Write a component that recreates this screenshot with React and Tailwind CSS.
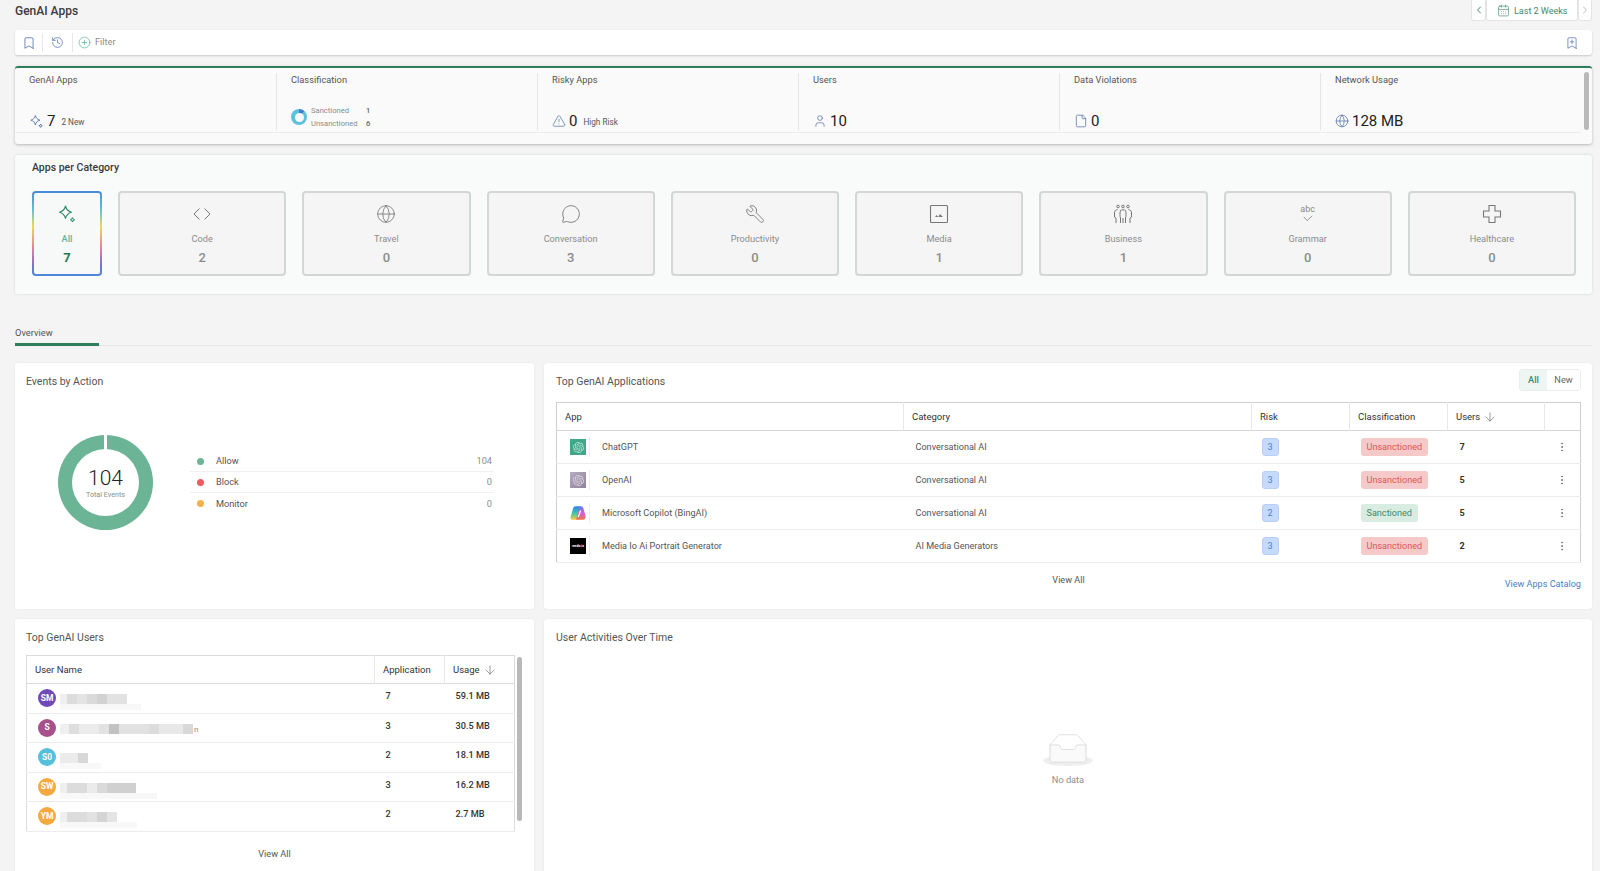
import {
  ArrowDown,
  Bookmark,
  BookmarkPlus,
  CalendarDays,
  ChevronLeft,
  ChevronRight,
  CirclePlus,
  EllipsisVertical,
  File,
  Globe,
  History,
  MessageCircle,
  TriangleAlert,
  User,
  Wrench,
} from 'lucide-react';
import { SiOpenai } from 'react-icons/si';

const SparkleIcon = ({ className }) => (
  <svg viewBox="0 0 20 20" fill="none" stroke="currentColor" strokeWidth="1.1" className={className}>
    <path d="M8.5 2 C9.3 5.4 11 7.2 14.5 8.2 C11 9.2 9.3 11 8.5 14.5 C7.7 11 6 9.2 2.5 8.2 C6 7.2 7.7 5.4 8.5 2 Z" strokeLinejoin="round" />
    <path d="M15.5 13.5 C15.8 14.8 16.4 15.4 17.7 15.7 C16.4 16 15.8 16.6 15.5 17.9 C15.2 16.6 14.6 16 13.3 15.7 C14.6 15.4 15.2 14.8 15.5 13.5 Z" />
  </svg>
);

const CodeIcon = ({ className }) => (
  <svg viewBox="0 0 20 20" fill="none" stroke="currentColor" strokeWidth="1" className={className}>
    <path d="M7.5 4.5 L2 10 L7.5 15.5" />
    <path d="M12.5 4.5 L18 10 L12.5 15.5" />
  </svg>
);

const MediaIcon = ({ className }) => (
  <svg viewBox="0 0 20 20" fill="none" stroke="currentColor" strokeWidth="1.1" className={className}>
    <rect x="1.5" y="1.5" width="17" height="17" rx="1" />
    <path d="M6 13 L7.7 11 L9.2 13 Z M9.3 13 L11 10 L14 13 Z" fill="currentColor" stroke="none" />
  </svg>
);

const BusinessIcon = ({ className }) => (
  <svg viewBox="0 0 20 20" fill="none" stroke="currentColor" strokeWidth="1" className={className}>
    <circle cx="5" cy="2.5" r="1.3" />
    <circle cx="10" cy="2.5" r="1.3" />
    <circle cx="15" cy="2.5" r="1.3" />
    <path d="M7.5 19 V14 C6.8 13 6.8 8 7.5 6.5 C8 5.6 12 5.6 12.5 6.5 C13.2 8 13.2 13 12.5 14 V19" />
    <path d="M10 14 V19" />
    <path d="M4.5 5.5 C2.5 6 1.5 7 1.5 9 V13 L3 14 V19" />
    <path d="M15.5 5.5 C17.5 6 18.5 7 18.5 9 V13 L17 14 V19" />
  </svg>
);

const GrammarIcon = () => (
  <div className="flex h-[20px] w-[20px] flex-col items-center">
    <span className="text-[9px] leading-[10px] text-[#8a8a8a]">abc</span>
    <svg viewBox="0 0 12 8" fill="none" stroke="#7a7a7a" strokeWidth="0.9" className="mt-[1px] h-[7px] w-[10px]">
      <path d="M1 2 L5 6.5 L11 1" />
    </svg>
  </div>
);

const HealthIcon = ({ className }) => (
  <svg viewBox="0 0 20 20" fill="none" stroke="currentColor" strokeWidth="1.1" className={className}>
    <path d="M7 1.5 H13 V7 H18.5 V13 H13 V18.5 H7 V13 H1.5 V7 H7 Z" />
  </svg>
);

const EmptyIcon = () => (
  <svg width="50" height="32" viewBox="0 0 64 41">
    <g transform="translate(0 1)" fill="none" fillRule="evenodd">
      <ellipse fill="#eeeeee" cx="32" cy="33" rx="32" ry="7" />
      <g fillRule="nonzero" stroke="#d9d9d9">
        <path d="M55 12.76L44.854 1.258C44.367.474 43.656 0 42.907 0H21.093c-.749 0-1.46.474-1.947 1.257L9 12.761V22h46v-9.24z" />
        <path d="M41.613 15.931c0-1.605.994-2.93 2.227-2.931H55v18.137C55 33.26 53.68 35 52.05 35h-40.1C10.32 35 9 33.259 9 31.137V13h11.16c1.233 0 2.227 1.323 2.227 2.928v.022c0 1.605 1.005 2.901 2.237 2.901h14.752c1.232 0 2.237-1.308 2.237-2.913v-.007z" fill="#fafafa" />
      </g>
    </g>
  </svg>
);

const CopilotLogo = () => (
  <svg viewBox="0 0 20 20" className="h-[16px] w-[16px]">
    <defs>
      <linearGradient id="cpA" x1="0" y1="0" x2="0" y2="1">
        <stop offset="0" stopColor="#2d7ff0" />
        <stop offset="0.5" stopColor="#37c8a8" />
        <stop offset="1" stopColor="#f8c93c" />
      </linearGradient>
      <linearGradient id="cpB" x1="0" y1="0" x2="0" y2="1">
        <stop offset="0" stopColor="#5f78f0" />
        <stop offset="0.5" stopColor="#d35fe0" />
        <stop offset="1" stopColor="#f2743e" />
      </linearGradient>
    </defs>
    <path d="M13 1.5 C15 1.5 16.2 2.6 16.8 4.4 L19.4 13.5 C20 16.4 18.5 18.5 16.5 18.5 H7 L9.5 8 C10.2 4 11 1.5 13 1.5 Z" fill="url(#cpB)" />
    <path d="M7 1.5 H13.5 C11.6 2 11 4.5 10.4 7.5 L8 16.5 C7.6 17.9 6.6 18.5 5.5 18.5 H3.5 C1.2 18.5 0.2 16.8 0.8 14.8 L3.8 4.5 C4.4 2.4 5.5 1.5 7 1.5 Z" fill="url(#cpA)" />
    <path d="M13 7.5 L10.5 14.5" stroke="#ffffff" strokeWidth="1.6" strokeLinecap="round" />
  </svg>
);

const ChatLogo = () => (
  <div className="flex h-[16px] w-[16px] items-center justify-center bg-[#3fa888] text-[#b9e3d5]">
    <SiOpenai className="h-[11px] w-[11px]" />
  </div>
);

const OpenAiLogo = () => (
  <div className="flex h-[16px] w-[16px] items-center justify-center bg-[linear-gradient(135deg,#b5adc0,#8f8399)] text-[#dcd7e2]">
    <SiOpenai className="h-[11px] w-[11px]" />
  </div>
);

const MediaLogo = () => (
  <div className="flex h-[16px] w-[16px] items-center justify-center overflow-hidden bg-black">
    <span className="text-[3px] leading-none font-bold text-white">media.io</span>
  </div>
);

const stats = [
  { label: 'GenAI Apps', icon: <SparkleIcon className="h-[15px] w-[15px] text-[#4a6aa5]" />, value: '7', note: '2 New' },
  { label: 'Classification' },
  { label: 'Risky Apps', icon: <TriangleAlert size={14} strokeWidth={1.2} className="text-[#4a6aa5]" />, value: '0', note: 'High Risk' },
  { label: 'Users', icon: <User size={14} strokeWidth={1.2} className="text-[#4a6aa5]" />, value: '10' },
  { label: 'Data Violations', icon: <File size={14} strokeWidth={1.2} className="text-[#4a6aa5]" />, value: '0' },
  { label: 'Network Usage', icon: <Globe size={14} strokeWidth={1.2} className="text-[#4a6aa5]" />, value: '128 MB' },
];

const categories = [
  { name: 'Code', count: 2, icon: <CodeIcon className="h-[20px] w-[20px]" /> },
  { name: 'Travel', count: 0, icon: <Globe size={20} strokeWidth={1} /> },
  { name: 'Conversation', count: 3, icon: <MessageCircle size={20} strokeWidth={1.1} /> },
  { name: 'Productivity', count: 0, icon: <Wrench size={20} strokeWidth={1.1} className="-scale-x-100" /> },
  { name: 'Media', count: 1, icon: <MediaIcon className="h-[20px] w-[20px]" /> },
  { name: 'Business', count: 1, icon: <BusinessIcon className="h-[20px] w-[20px]" /> },
  { name: 'Grammar', count: 0, icon: <GrammarIcon /> },
  { name: 'Healthcare', count: 0, icon: <HealthIcon className="h-[20px] w-[20px]" /> },
];

const legend = [
  { name: 'Allow', value: 104, dot: 'bg-[#6bb596]' },
  { name: 'Block', value: 0, dot: 'bg-[#ea5f5f]' },
  { name: 'Monitor', value: 0, dot: 'bg-[#f5b04a]' },
];

const apps = [
  { name: 'ChatGPT', logo: <ChatLogo />, category: 'Conversational AI', risk: 3, sanctioned: false, users: 7 },
  { name: 'OpenAI', logo: <OpenAiLogo />, category: 'Conversational AI', risk: 3, sanctioned: false, users: 5 },
  { name: 'Microsoft Copilot (BingAI)', logo: <CopilotLogo />, category: 'Conversational AI', risk: 2, sanctioned: true, users: 5 },
  { name: 'Media Io Ai Portrait Generator', logo: <MediaLogo />, category: 'AI Media Generators', risk: 3, sanctioned: false, users: 2 },
];

const users = [
  { initials: 'SM', color: 'bg-[#6f4bb8]', app: 7, usage: '59.1 MB', blur: ['w-[7px] bg-[#efefef]', 'w-[10px] bg-[#dcdcdc]', 'w-[10px] bg-[#e4e4e4]', 'w-[10px] bg-[#dadada]', 'w-[10px] bg-[#d2d2d2]', 'w-[20px] bg-[#e2e2e2]'], sub: 'w-[81px]' },
  { initials: 'S', color: 'bg-[#a8508c]', app: 3, usage: '30.5 MB', blur: ['w-[9px] bg-[#efefef]', 'w-[10px] bg-[#dedede]', 'w-[20px] bg-[#ebebeb]', 'w-[10px] bg-[#e2e2e2]', 'w-[10px] bg-[#c2c2c2]', 'w-[30px] bg-[#e2e2e2]', 'w-[10px] bg-[#dcdcdc]', 'w-[24px] bg-[#e8e8e8]', 'w-[10px] bg-[#d8d8d8]'] },
  { initials: 'S0', color: 'bg-[#56c0da]', app: 2, usage: '18.1 MB', blur: ['w-[18px] bg-[#ebebeb]', 'w-[10px] bg-[#d8d8d8]'], sub: 'w-[41px]' },
  { initials: 'SW', color: 'bg-[#f5a93f]', app: 3, usage: '16.2 MB', blur: ['w-[7px] bg-[#efefef]', 'w-[20px] bg-[#dcdcdc]', 'w-[10px] bg-[#ebebeb]', 'w-[10px] bg-[#dadada]', 'w-[29px] bg-[#d0d0d0]'], sub: 'w-[97px]' },
  { initials: 'YM', color: 'bg-[#f5a93f]', app: 2, usage: '2.7 MB', blur: ['w-[7px] bg-[#efefef]', 'w-[20px] bg-[#dcdcdc]', 'w-[10px] bg-[#e2e2e2]', 'w-[10px] bg-[#d4d4d4]', 'w-[10px] bg-[#e4e4e4]'], sub: 'w-[77px]' },
];

const Card = ({ children, className }) => (
  <div className={`rounded-[3px] bg-white shadow-[0_0_2px_rgba(0,0,0,0.08)] ${className}`}>{children}</div>
);

const HeadCell = ({ children, last }) => (
  <th className={`px-[8px] text-left text-[9.5px] leading-[14px] font-normal text-[#333] ${last ? '' : 'border-r border-[#e8e8e8]'}`}>{children}</th>
);

export default function App() {
  return (
    <div className="h-screen overflow-hidden bg-[#f4f4f4] pr-[8px] pl-[15px] font-[Roboto,sans-serif]">
      {/* title row */}
      <div className="flex h-[30px] items-start justify-between">
        <h1 className="mt-[3px] text-[12px] leading-[16px] font-medium text-[#3a3a3a]">GenAI Apps</h1>
        <div className="flex h-[21px] items-stretch">
          <div className="flex w-[15px] items-center justify-center rounded-b-[3px] border border-t-0 border-[#e4e4e4] bg-white text-[#3c8c6a]">
            <ChevronLeft size={12} />
          </div>
          <div className="flex w-[92px] items-center gap-[4px] rounded-b-[3px] border border-t-0 border-[#e4e4e4] bg-white pt-[1px] pl-[10px] text-[9px] leading-[12px] text-[#3c8c6a]">
            <CalendarDays size={13} strokeWidth={1.2} />
            <span>Last 2 Weeks</span>
          </div>
          <div className="flex w-[14px] items-center justify-center rounded-b-[3px] border border-t-0 border-[#e4e4e4] bg-white text-[#bbb]">
            <ChevronRight size={12} />
          </div>
        </div>
      </div>

      {/* filter bar */}
      <div className="flex h-[25px] items-center rounded-[3px] bg-white shadow-[0_1px_2px_rgba(0,0,0,0.18)]">
        <div className="flex h-[19px] w-[28px] items-center justify-center border-r border-[#e8e8e8] text-[#4a6aa5]">
          <Bookmark size={14} strokeWidth={1.3} />
        </div>
        <div className="flex h-[19px] w-[30px] items-center justify-center border-r border-[#e8e8e8] text-[#4a6aa5]">
          <History size={13} strokeWidth={1.3} />
        </div>
        <CirclePlus size={13} strokeWidth={1.2} className="ml-[5px] text-[#4fa887]" />
        <span className="-mt-[1px] ml-[4px] text-[9.2px] leading-[12px] text-[#8c8c8c]">Filter</span>
        <BookmarkPlus size={14} strokeWidth={1.2} className="mr-[13px] ml-auto text-[#4a6aa5]" />
      </div>

      {/* stats */}
      <div className="mt-[11px] h-[78px] rounded-[3px] border-t-2 border-[#2f7d5b] bg-[#fafafa] shadow-[0_1px_3px_rgba(0,0,0,0.25)]">
        <div className="flex h-[65px] items-start">
          <div className="grid h-[65px] w-[1566px] grid-cols-6 border-b border-[#ececec]">
            {stats.map((s, i) => (
              <div key={s.label} className={`mt-[5px] flex h-[57px] flex-col justify-between pl-[14px] ${i > 0 ? 'border-l border-[#e6e6e6]' : ''}`}>
                <span className="text-[9.3px] leading-[14px] text-[#555]">{s.label}</span>
                {s.label === 'Classification' ? (
                  <div className="flex h-[26px] items-center">
                    <div className="flex h-[16px] w-[16px] items-center justify-center rounded-full bg-[conic-gradient(#3f7fd0_0_12%,#5cc2de_12%_100%)]">
                      <div className="h-[9px] w-[9px] rounded-full bg-[#fafafa]" />
                    </div>
                    <div className="ml-[4px] grid grid-cols-[55px_auto] text-[7.6px] leading-[13px] text-[#8c8c8c]">
                      <span>Sanctioned</span>
                      <span className="font-medium text-[#666]">1</span>
                      <span>Unsanctioned</span>
                      <span className="font-medium text-[#666]">6</span>
                    </div>
                  </div>
                ) : (
                  <div className="flex h-[18px] items-center gap-[3px]">
                    {s.icon}
                    <span className="text-[15px] leading-[18px] text-[#222]">{s.value}</span>
                    {s.note && <span className="mt-[3px] ml-[3px] text-[8.2px] text-[#555]">{s.note}</span>}
                  </div>
                )}
              </div>
            ))}
          </div>
          <div className="mt-[4px] ml-[3px] h-[58px] w-[5px] rounded-full bg-[#b9b9b9]" />
        </div>
      </div>

      {/* apps per category */}
      <div className="mt-[11px] h-[139px] rounded-[3px] bg-[#f9fafa] pt-[6px] pr-[16px] pl-[17px] shadow-[0_0_3px_rgba(0,0,0,0.12)]">
        <h2 className="text-[10.5px] leading-[14px] font-medium text-[#3a3a3a]">Apps per Category</h2>
        <div className="mt-[16px] flex gap-[16px]">
          <div className="h-[85px] w-[70px] shrink-0 rounded-[4px] bg-[linear-gradient(180deg,#4a8ad8_0%,#57c4d8_22%,#f0d94e_42%,#ec7aa0_68%,#7a6fd0_88%,#4a8ad8_100%)] p-[2px]">
            <div className="flex h-full flex-col items-center rounded-[2px] bg-[#f7f8f8] pt-[11px]">
              <SparkleIcon className="h-[20px] w-[20px] text-[#2f8a65]" />
              <span className="mt-[8px] text-[9.2px] leading-[14px] font-medium text-[#62b596]">All</span>
              <span className="mt-[5px] text-[13px] leading-[14px] font-bold text-[#1f7a54]">7</span>
            </div>
          </div>
          {categories.map((c) => (
            <div key={c.name} className="flex h-[85px] flex-1 flex-col items-center rounded-[4px] border-2 border-[#d3d6d6] bg-[#f5f5f5] pt-[11px] text-[#777]">
              {c.icon}
              <span className="mt-[8px] text-[9.2px] leading-[14px] text-[#8c8c8c]">{c.name}</span>
              <span className="mt-[5px] text-[13px] leading-[14px] font-medium text-[#8c8c8c]">{c.count}</span>
            </div>
          ))}
        </div>
      </div>

      {/* tabs */}
      <div className="border-b border-[#e6e6e6] pt-[32px]">
        <div className="-mb-px w-[84px] border-b-[3px] border-[#2f7d5b] pb-[3px] text-[9.3px] leading-[14px] text-[#555]">Overview</div>
      </div>

      {/* first row */}
      <div className="mt-[17px] grid h-[246px] grid-cols-[519px_1fr] gap-[10px]">
        <Card className="px-[11px] pt-[12px]">
          <h2 className="text-[10.5px] leading-[14px] text-[#555]">Events by Action</h2>
          <div className="mt-[46px] flex items-center">
            <div className="relative ml-[32px] h-[95px] w-[95px] rounded-full bg-[conic-gradient(#ffffff_0_0.6%,#6bb596_0.6%_99.4%,#ffffff_99.4%_100%)]">
              <div className="absolute inset-[14px] flex flex-col items-center justify-center rounded-full bg-white">
                <span className="text-[21px] leading-[24px] font-light text-[#222]">104</span>
                <span className="text-[7.2px] leading-[10px] text-[#8c8c8c]">Total Events</span>
              </div>
            </div>
            <div className="ml-[37px] w-[304px]">
              {legend.map((l, i) => (
                <div key={l.name} className={`flex h-[21px] items-center pr-[2px] pl-[7px] text-[9.2px] ${i < 2 ? 'border-b border-[#f0f0f0]' : ''}`}>
                  <span className={`h-[7px] w-[7px] rounded-full ${l.dot}`} />
                  <span className="ml-[12px] text-[#555]">{l.name}</span>
                  <span className="ml-auto text-[#8c8c8c]">{l.value}</span>
                </div>
              ))}
            </div>
          </div>
        </Card>

        <Card className="pt-[6px] pr-[11px] pl-[12px]">
          <div className="flex items-start justify-between">
            <h2 className="mt-[6px] text-[10.5px] leading-[14px] text-[#555]">Top GenAI Applications</h2>
            <div className="flex h-[22px] overflow-hidden rounded-[3px] border border-[#ececec] text-[9.2px]">
              <span className="flex w-[27px] items-center justify-center bg-[#eff5f2] font-medium text-[#3c8c6a]">All</span>
              <span className="flex w-[33px] items-center justify-center text-[#666]">New</span>
            </div>
          </div>
          <table className="mt-[11px] w-full table-fixed border-collapse border border-[#cfcfcf]">
            <colgroup>
              <col className="w-[347px]" />
              <col className="w-[348px]" />
              <col className="w-[98px]" />
              <col className="w-[98px]" />
              <col className="w-[97px]" />
              <col />
            </colgroup>
            <thead>
              <tr className="h-[28px] border-b border-[#d6d6d6]">
                <HeadCell>App</HeadCell>
                <HeadCell>Category</HeadCell>
                <HeadCell>Risk</HeadCell>
                <HeadCell>Classification</HeadCell>
                <HeadCell>
                  <span className="flex items-center gap-[3px]">
                    Users <ArrowDown size={14} strokeWidth={1.1} className="text-[#666]" />
                  </span>
                </HeadCell>
                <HeadCell last />
              </tr>
            </thead>
            <tbody>
              {apps.map((a) => (
                <tr key={a.name} className="h-[33px] border-b border-[#ececec] text-[9.1px] leading-[14px] text-[#555]">
                  <td className="pl-[13px]">
                    <div className="flex items-center">
                      <span className="w-[19px]">{a.logo}</span>
                      <span className="h-[20px] border-l border-[#eeeeee]" />
                      <span className="ml-[12px]">{a.name}</span>
                    </div>
                  </td>
                  <td className="pl-[12px]">{a.category}</td>
                  <td className="pl-[10px]">
                    <span className="flex h-[18px] w-[17px] items-center justify-center rounded-[3px] border border-[#b7cff8] bg-[#c6dafb] text-[#4a7fd8]">{a.risk}</span>
                  </td>
                  <td className="pl-[11px]">
                    {a.sanctioned ? (
                      <span className="inline-flex h-[18px] items-center rounded-[3px] bg-[#d8ece2] px-[6px] text-[#3f8a68]">Sanctioned</span>
                    ) : (
                      <span className="inline-flex h-[18px] items-center rounded-[3px] bg-[#f5c9c7] px-[6px] text-[#e0555a]">Unsanctioned</span>
                    )}
                  </td>
                  <td className="pl-[12px] font-bold text-[#333]">{a.users}</td>
                  <td className="text-[#777]">
                    <div className="flex justify-center">
                      <EllipsisVertical size={12} />
                    </div>
                  </td>
                </tr>
              ))}
            </tbody>
          </table>
          <div className="mt-[10px] grid grid-cols-3 items-start text-[9.1px] leading-[14px]">
            <span />
            <span className="text-center text-[#555]">View All</span>
            <span className="mt-[4px] text-right text-[#4a80c8]">View Apps Catalog</span>
          </div>
        </Card>
      </div>

      {/* second row */}
      <div className="mt-[10px] grid h-[300px] grid-cols-[519px_1fr] gap-[10px]">
        <Card className="pt-[12px] pr-[12px] pl-[11px]">
          <h2 className="text-[10.5px] leading-[14px] text-[#555]">Top GenAI Users</h2>
          <div className="mt-[10px] flex items-start">
            <table className="w-[488px] table-fixed border-collapse border border-[#dcdcdc]">
              <colgroup>
                <col className="w-[348px]" />
                <col className="w-[70px]" />
                <col className="w-[70px]" />
              </colgroup>
              <thead>
                <tr className="h-[28px] border-b border-[#dcdcdc]">
                  <HeadCell>User Name</HeadCell>
                  <HeadCell>Application</HeadCell>
                  <HeadCell last>
                    <span className="flex items-center gap-[3px]">
                      Usage <ArrowDown size={14} strokeWidth={1.1} className="text-[#666]" />
                    </span>
                  </HeadCell>
                </tr>
              </thead>
              <tbody>
                {users.map((u) => (
                  <tr key={u.initials} className="h-[29.6px] border-b border-[#ececec] align-top text-[9.2px] font-medium text-[#333]">
                    <td className="pl-[11px]">
                      <div className="mt-[5px] flex">
                        <span className={`flex h-[18px] w-[18px] items-center justify-center rounded-full text-[8.5px] font-bold text-white ${u.color}`}>{u.initials}</span>
                        <div className="mt-[5px] ml-[4px]">
                          <div className="flex h-[10px]">
                            {u.blur.map((b, i) => (
                              <span key={i} className={b} />
                            ))}
                            {!u.sub && <span className="ml-[1px] text-[8px] leading-[12px] font-normal text-[#888]">n</span>}
                          </div>
                          {u.sub && <div className={`h-[6px] bg-[#f8f8f8] ${u.sub}`} />}
                        </div>
                      </div>
                    </td>
                    <td className="pt-[5px] pl-[11px]">{u.app}</td>
                    <td className="pt-[5px] pl-[11px]">{u.usage}</td>
                  </tr>
                ))}
              </tbody>
            </table>
            <div className="mt-[2px] ml-[2px] h-[164px] w-[5px] rounded-full bg-[#b9b9b9]" />
          </div>
          <div className="mt-[15px] w-[497px] text-center text-[9.2px] text-[#555]">View All</div>
        </Card>

        <Card className="px-[12px] pt-[12px]">
          <h2 className="text-[10.5px] leading-[14px] text-[#555]">User Activities Over Time</h2>
          <div className="mt-[89px] flex flex-col items-center">
            <EmptyIcon />
            <span className="mt-[7px] text-[9.2px] text-[#8c8c8c]">No data</span>
          </div>
        </Card>
      </div>
    </div>
  );
}
